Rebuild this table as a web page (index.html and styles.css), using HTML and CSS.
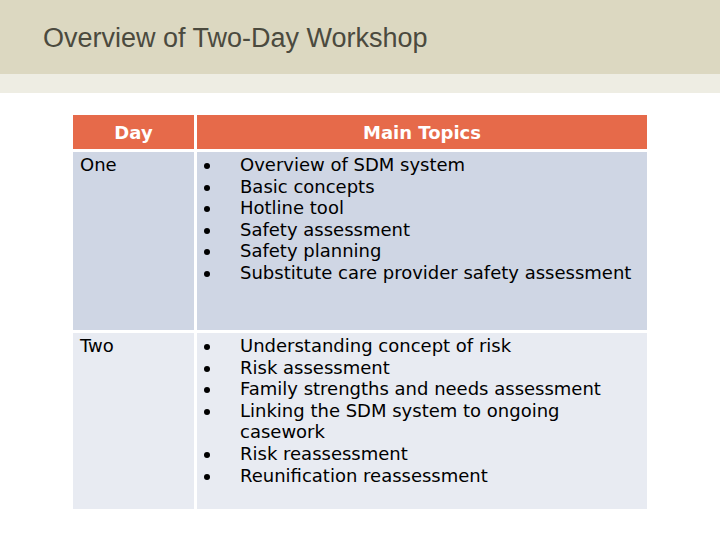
FILE: index.html
```html
<!DOCTYPE html>
<html>
<head>
<meta charset="utf-8">
<link rel="stylesheet" href="styles.css">
</head>
<body>
<header class="band">
  <h1 class="title">Overview of Two-Day Workshop</h1>
</header>
<div class="subband"></div>
<main class="content">
  <div class="grid">
    <div class="cell head">Day</div>
    <div class="cell head">Main Topics</div>
    <div class="cell odd day">One</div>
    <div class="cell odd">
      <ul class="topics">
        <li>Overview of SDM system</li>
        <li>Basic concepts</li>
        <li>Hotline tool</li>
        <li>Safety assessment</li>
        <li>Safety planning</li>
        <li>Substitute care provider safety assessment</li>
      </ul>
    </div>
    <div class="cell even day">Two</div>
    <div class="cell even">
      <ul class="topics">
        <li>Understanding concept of risk</li>
        <li>Risk assessment</li>
        <li>Family strengths and needs assessment</li>
        <li>Linking the SDM system to ongoing casework</li>
        <li>Risk reassessment</li>
        <li>Reunification reassessment</li>
      </ul>
    </div>
  </div>
</main>
</body>
</html>
```
FILE: styles.css
```css
html, body {
  margin: 0;
  padding: 0;
  background: #ffffff;
  width: 720px;
  height: 540px;
  overflow: hidden;
}
.band {
  height: 74px;
  background: #dcd8c1;
  display: flex;
  align-items: flex-start;
}
.title {
  margin: 23px 0 0 43px;
  font-family: "Liberation Sans", Arial, sans-serif;
  font-weight: normal;
  font-size: 27px;
  line-height: 31px;
  color: #4b4a3e;
}
.subband {
  height: 19px;
  background: #eeede3;
}
.content {
  padding: 22px 0 0 73px;
}
.grid {
  display: grid;
  grid-template-columns: 121px 450px;
  grid-template-rows: 34px 178px 176px;
  gap: 3px;
  font-family: "DejaVu Sans", Verdana, sans-serif;
  font-size: 18px;
  color: #000;
}
.cell {
  box-sizing: border-box;
}
.head {
  background: #e66a4a;
  color: #ffffff;
  font-weight: bold;
  display: flex;
  align-items: center;
  justify-content: center;
  font-size: 18px;
}
.odd {
  background: #cfd6e4;
}
.even {
  background: #e8ebf2;
}
.day {
  padding: 3px 0 0 7px;
  line-height: 20px;
}
.topics {
  margin: 0;
  padding: 2px 0 0 43px;
  line-height: 21.6px;
  list-style: none;
}
.topics li {
  position: relative;
}
.topics li::before {
  content: "";
  position: absolute;
  left: -36px;
  top: 9px;
  width: 6px;
  height: 6px;
  border-radius: 50%;
  background: #000;
}
```
